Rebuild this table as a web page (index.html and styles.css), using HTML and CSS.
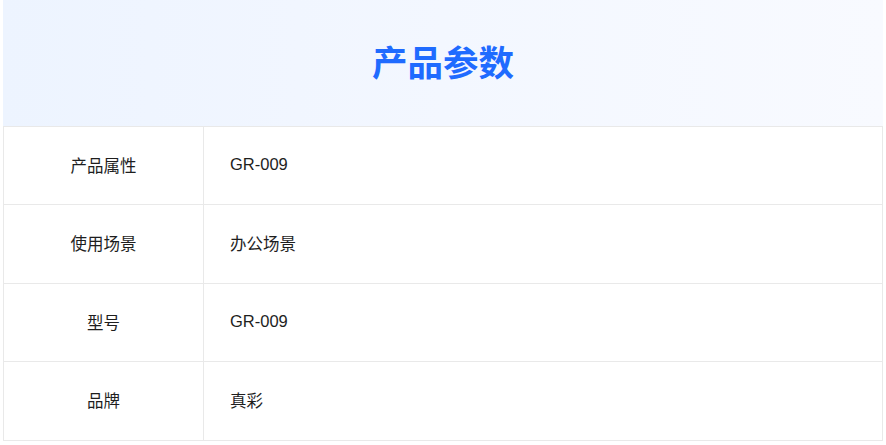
FILE: index.html
```html
<!DOCTYPE html>
<html lang="zh-CN">
<head>
<meta charset="utf-8">
<title>产品参数</title>
<link rel="stylesheet" href="styles.css">
</head>
<body>
<div class="wrap">
  <div class="head"><h1 class="title">产品参数</h1></div>
  <div class="table">
    <div class="row"><div class="k">产品属性</div><div class="v">GR-009</div></div>
    <div class="row"><div class="k">使用场景</div><div class="v">办公场景</div></div>
    <div class="row"><div class="k">型号</div><div class="v">GR-009</div></div>
    <div class="row"><div class="k">品牌</div><div class="v">真彩</div></div>
  </div>
</div>
</body>
</html>
```
FILE: styles.css
```css
html, body { margin: 0; padding: 0; background: #fff; }
body { font-family: "Liberation Sans", "Noto Sans CJK SC", sans-serif; color: #1e1e1e; }
.wrap { margin: 0 3px; }
.head {
  height: 126px;
  display: flex;
  align-items: center;
  justify-content: center;
  background: linear-gradient(90deg, #edf4ff 0%, #f3f7ff 50%, #f8faff 100%);
}
.title {
  margin: 0;
  font-family: "Noto Sans CJK SC", sans-serif;
  font-size: 35.5px;
  font-weight: 700;
  color: #1f6bff;
  transform: translateY(-3px);
}
.table {
  border: 1px solid #e9e9e9;
  border-bottom-width: 0;
}
.row {
  display: grid;
  grid-template-columns: 200px 1fr;
  height: 78px;
  border-bottom: 1px solid #e9e9e9;
  box-sizing: border-box;
  font-size: 16.5px;
}
.row:nth-child(even) { height: 79px; }
.k {
  border-right: 1px solid #e9e9e9;
  display: flex;
  align-items: center;
  justify-content: center;
  padding-bottom: 2px;
}
.v {
  display: flex;
  align-items: center;
  padding-left: 26px;
  padding-bottom: 2px;
}
```
